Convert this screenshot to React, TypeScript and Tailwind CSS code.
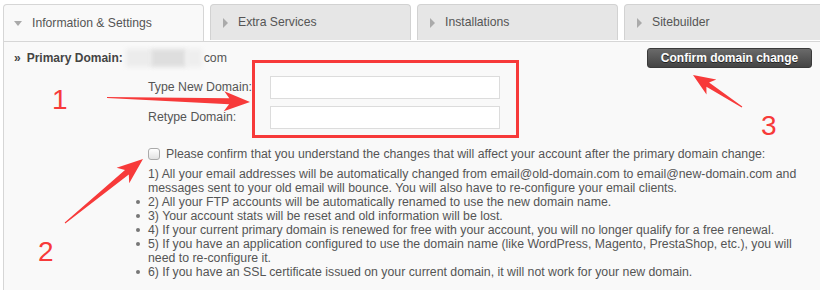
import React from 'react'

const tabs = ['Information & Settings', 'Extra Services', 'Installations', 'Sitebuilder']

const notes = [
  '1) All your email addresses will be automatically changed from email@old-domain.com to email@new-domain.com and messages sent to your old email will bounce. You will also have to re-configure your email clients.',
  '2) All your FTP accounts will be automatically renamed to use the new domain name.',
  '3) Your account stats will be reset and old information will be lost.',
  '4) If your current primary domain is renewed for free with your account, you will no longer qualify for a free renewal.',
  '5) If you have an application configured to use the domain name (like WordPress, Magento, PrestaShop, etc.), you will need to re-configure it.',
  '6) If you have an SSL certificate issued on your current domain, it will not work for your new domain.',
]

function arrowPoints(
  x1: number,
  y1: number,
  x2: number,
  y2: number,
  headLen: number,
  headW: number,
  shaftW: number,
): string {
  const len = Math.hypot(x2 - x1, y2 - y1)
  const dx = (x2 - x1) / len
  const dy = (y2 - y1) / len
  const nx = -dy
  const ny = dx
  const bx = x2 - dx * headLen
  const by = y2 - dy * headLen
  const ix = x2 - dx * headLen * 0.8
  const iy = y2 - dy * headLen * 0.8
  const pts: [number, number][] = [
    [x1 + nx * 0.5, y1 + ny * 0.5],
    [ix + (nx * shaftW) / 2, iy + (ny * shaftW) / 2],
    [bx + (nx * headW) / 2, by + (ny * headW) / 2],
    [x2, y2],
    [bx - (nx * headW) / 2, by - (ny * headW) / 2],
    [ix - (nx * shaftW) / 2, iy - (ny * shaftW) / 2],
    [x1 - nx * 0.5, y1 - ny * 0.5],
  ]
  return pts.map(([x, y]) => `${x.toFixed(1)},${y.toFixed(1)}`).join(' ')
}

function Caret({ open }: { open: boolean }) {
  return open ? (
    <span className="mr-[10px] inline-block h-0 w-0 border-x-[4px] border-t-[5px] border-x-transparent border-t-[#aaa]" />
  ) : (
    <span className="mr-[10px] inline-block h-0 w-0 border-y-[5px] border-l-[5px] border-y-transparent border-l-[#aaa]" />
  )
}

export default function App() {
  return (
    <div
      className="relative h-[290px] w-[820px] overflow-hidden bg-white text-[#555]"
      style={{ fontFamily: '"Liberation Sans", Arial, sans-serif' }}
    >
      {/* tabs */}
      <div className="relative z-10 flex gap-[6px] pl-[3px] pt-[4px]">
        {tabs.map((t, i) => (
          <div
            key={t}
            className={
              i === 0
                ? 'flex h-[37px] w-[201px] shrink-0 items-center rounded-t-[4px] border border-b-0 border-[#d6d6d6] bg-[#f9f9f9] pl-[10px] text-[12.2px]'
                : 'flex h-[36px] w-[201px] shrink-0 items-center rounded-t-[4px] border border-b-0 border-[#d2d2d2] bg-[#e6e6e6] pl-[12px] text-[12.2px]'
            }
          >
            <Caret open={i === 0} />
            {t}
          </div>
        ))}
      </div>

      {/* panel */}
      <div className="ml-[3px] h-[260px] border-l border-t border-[#d6d6d6] bg-[#f9f9f9] pt-[6px]">
        <div className="flex items-center justify-between pl-[10px] pr-[8px]">
          <div className="flex items-center text-[12px]">
            <span className="mr-[6px] font-bold text-[#444]">»</span>
            <span className="font-bold text-[#444]">Primary Domain:</span>
            <span className="ml-[3px] flex h-[18px] w-[76px]">
              <span className="h-full w-[25px] bg-[#ececec] blur-[2px]" />
              <span className="h-full w-[35px] bg-[#dedede] blur-[2px]" />
              <span className="h-full w-[16px] bg-[#eeeeee] blur-[2px]" />
            </span>
            <span className="ml-[2px] text-[12.3px] text-[#555]">com</span>
          </div>
          <button
            className="h-[20px] w-[165px] rounded-[3px] border border-[#3a3a3a] bg-gradient-to-b from-[#6a6a6a] to-[#444] text-[12px] font-bold text-white"
            style={{ textShadow: '0 1px 0 #222' }}
          >
            Confirm domain change
          </button>
        </div>

        <div className="mt-[8px] flex flex-col gap-[7px] pl-[144px] text-[12.3px]">
          <div className="flex items-center">
            <span className="w-[122px]">Type New Domain:</span>
            <input className="h-[23px] w-[230px] border border-[#dcdcdc] bg-white" />
          </div>
          <div className="flex items-center">
            <span className="w-[122px]">Retype Domain:</span>
            <input className="h-[23px] w-[230px] border border-[#dcdcdc] bg-white" />
          </div>
        </div>

        <div className="mt-[18px] flex h-[14px] items-center whitespace-nowrap pl-[144px] text-[12.3px]">
          <span className="mr-[6px] h-[12px] w-[12px] shrink-0 rounded-[3px] border border-[#aaa] bg-gradient-to-b from-[#fff] to-[#e2e2e2]" />
          Please confirm that you understand the changes that will affect your account after the primary domain change:
        </div>

        <ul className="mt-[6px] w-[808px] pl-[144px] text-[12.3px] leading-[14px]">
          {notes.map((n, i) => (
            <li key={n} className="relative">
              {i > 0 && (
                <span className="absolute left-[-12px] top-[5px] h-[4px] w-[4px] rounded-full bg-[#777]" />
              )}
              {n}
            </li>
          ))}
        </ul>
      </div>

      {/* annotations */}
      <div className="absolute left-[252px] top-[60px] h-[78px] w-[267px] border-[3px] border-[#f73a3a]" />
      <svg className="pointer-events-none absolute left-0 top-0" width="820" height="290">
        <polygon points={arrowPoints(107, 97.5, 250, 102, 26, 20, 6)} fill="#f73a3a" />
        <polygon points={arrowPoints(65, 223, 143, 159, 26, 20, 6)} fill="#f73a3a" />
        <polygon points={arrowPoints(742, 107, 693, 75, 22, 18, 5)} fill="#f73a3a" />
      </svg>
      <span className="absolute left-[52px] top-[84px] text-[28px] leading-[32px] text-[#f73a3a]">1</span>
      <span className="absolute left-[38px] top-[236px] text-[28px] leading-[32px] text-[#f73a3a]">2</span>
      <span className="absolute left-[761px] top-[110px] text-[28px] leading-[32px] text-[#f73a3a]">3</span>
    </div>
  )
}
